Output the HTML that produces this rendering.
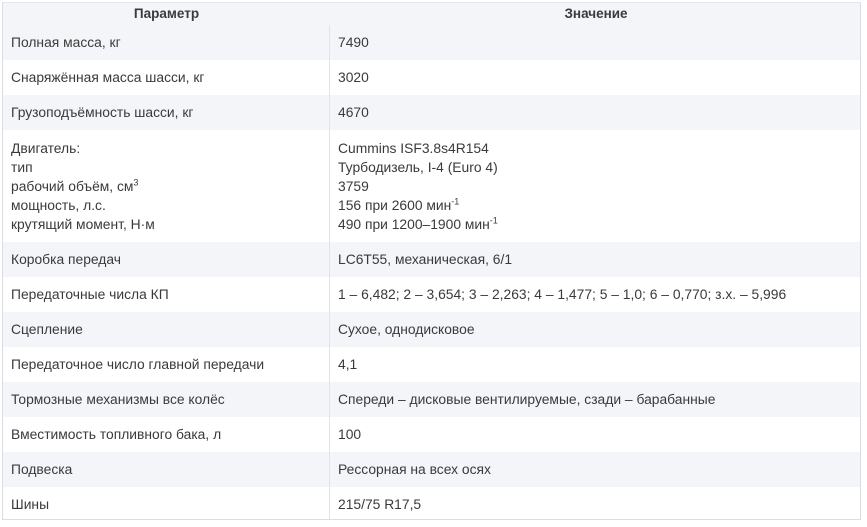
<!DOCTYPE html>
<html><head><meta charset="utf-8"><style>
body{margin:0;background:#fff;font-family:"Liberation Sans",sans-serif;color:#3a3a3a;font-size:13.85px}
.t{position:absolute;left:2px;top:2px;width:859px;height:518px;border:1px solid #dcdde2;border-top-color:#e6e7ec;box-sizing:border-box;overflow:hidden}
.r{position:absolute;left:0;width:100%;height:35px}
.s{background:#f4f5f9}
.c{position:absolute;top:0;line-height:35px;white-space:nowrap}
.a{left:8px}.b{left:335px}
.h{font-weight:bold;line-height:22px;text-align:center;font-size:13.5px}
.div{position:absolute;left:326px;top:22px;width:1px;height:500px;background:#e2e3e8}
.m{line-height:19px;top:9px}
sup{font-size:9px;line-height:0}
</style></head><body><div class="t">
<div class="r s" style="top:0;height:22px"><div class="c h" style="left:0;width:327px">Параметр</div><div class="c h" style="left:327px;width:532px">Значение</div></div>
<div class="r s" style="top:22px"><div class="c a">Полная масса, кг</div><div class="c b">7490</div></div>
<div class="r" style="top:57px"><div class="c a">Снаряжённая масса шасси, кг</div><div class="c b">3020</div></div>
<div class="r s" style="top:92px"><div class="c a">Грузоподъёмность шасси, кг</div><div class="c b">4670</div></div>
<div class="r" style="top:127px;height:112px"><div class="c a m">Двигатель:<br>тип<br>рабочий объём, см<sup>3</sup><br>мощность, л.с.<br>крутящий момент, Н·м</div><div class="c b m">Cummins ISF3.8s4R154<br>Турбодизель, I-4 (Euro 4)<br>3759<br>156 при 2600 мин<sup>-1</sup><br>490 при 1200–1900 мин<sup>-1</sup></div></div>
<div class="r s" style="top:239px"><div class="c a">Коробка передач</div><div class="c b">LC6T55, механическая, 6/1</div></div>
<div class="r" style="top:274px"><div class="c a">Передаточные числа КП</div><div class="c b">1 – 6,482; 2 – 3,654; 3 – 2,263; 4 – 1,477; 5 – 1,0; 6 – 0,770; з.х. – 5,996</div></div>
<div class="r s" style="top:309px"><div class="c a">Сцепление</div><div class="c b">Сухое, однодисковое</div></div>
<div class="r" style="top:344px"><div class="c a">Передаточное число главной передачи</div><div class="c b">4,1</div></div>
<div class="r s" style="top:379px"><div class="c a">Тормозные механизмы все колёс</div><div class="c b">Спереди – дисковые вентилируемые, сзади – барабанные</div></div>
<div class="r" style="top:414px"><div class="c a">Вместимость топливного бака, л</div><div class="c b">100</div></div>
<div class="r s" style="top:449px"><div class="c a">Подвеска</div><div class="c b">Рессорная на всех осях</div></div>
<div class="r" style="top:484px"><div class="c a">Шины</div><div class="c b">215/75 R17,5</div></div>
<div class="div"></div>
</div></body></html>
